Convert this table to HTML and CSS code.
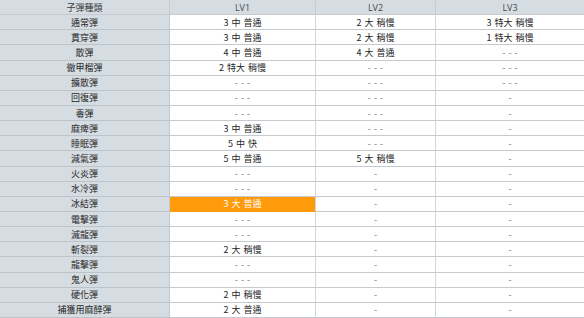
FILE: index.html
```html
<!DOCTYPE html>
<html lang="zh-Hant">
<head>
<meta charset="utf-8">
<link rel="stylesheet" href="styles.css">
</head>
<body>
<div class="sheet">
  <div class="c head">子彈種類</div><div class="c head lv">LV1</div><div class="c head lv">LV2</div><div class="c head lv last">LV3</div>

  <div class="c name">通常彈</div><div class="c">3 中 普通</div><div class="c">2 大 稍慢</div><div class="c last">3 特大 稍慢</div>
  <div class="c name">貫穿彈</div><div class="c">3 中 普通</div><div class="c">2 大 稍慢</div><div class="c last">1 特大 稍慢</div>
  <div class="c name">散彈</div><div class="c">4 中 普通</div><div class="c">4 大 普通</div><div class="c last dim">- - -</div>
  <div class="c name">徹甲榴彈</div><div class="c">2 特大 稍慢</div><div class="c dim">- - -</div><div class="c last dim">- - -</div>
  <div class="c name">擴散彈</div><div class="c dim">- - -</div><div class="c dim">- - -</div><div class="c last dim">- - -</div>
  <div class="c name">回復彈</div><div class="c dim">- - -</div><div class="c dim">- - -</div><div class="c last dim">-</div>
  <div class="c name">毒彈</div><div class="c dim">- - -</div><div class="c dim">- - -</div><div class="c last dim">-</div>
  <div class="c name">麻痺彈</div><div class="c">3 中 普通</div><div class="c dim">- - -</div><div class="c last dim">-</div>
  <div class="c name">睡眠彈</div><div class="c">5 中 快</div><div class="c dim">- - -</div><div class="c last dim">-</div>
  <div class="c name">減氣彈</div><div class="c">5 中 普通</div><div class="c">5 大 稍慢</div><div class="c last dim">-</div>
  <div class="c name">火炎彈</div><div class="c dim">- - -</div><div class="c dim">-</div><div class="c last dim">-</div>
  <div class="c name">水冷彈</div><div class="c dim">- - -</div><div class="c dim">-</div><div class="c last dim">-</div>
  <div class="c name">冰結彈</div><div class="c hot">3 大 普通</div><div class="c dim">-</div><div class="c last dim">-</div>
  <div class="c name">電擊彈</div><div class="c dim">- - -</div><div class="c dim">-</div><div class="c last dim">-</div>
  <div class="c name">滅龍彈</div><div class="c dim">- - -</div><div class="c dim">-</div><div class="c last dim">-</div>
  <div class="c name">斬裂彈</div><div class="c">2 大 稍慢</div><div class="c dim">-</div><div class="c last dim">-</div>
  <div class="c name">龍擊彈</div><div class="c dim">- - -</div><div class="c dim">-</div><div class="c last dim">-</div>
  <div class="c name">鬼人彈</div><div class="c dim">- - -</div><div class="c dim">-</div><div class="c last dim">-</div>
  <div class="c name">硬化彈</div><div class="c">2 中 稍慢</div><div class="c dim">-</div><div class="c last dim">-</div>
  <div class="c name">捕獲用麻醉彈</div><div class="c">2 大 普通</div><div class="c dim">-</div><div class="c last dim">-</div>
</div>
</body>
</html>
```

FILE: styles.css
```css
html, body {
  margin: 0;
  padding: 0;
  background: #ffffff;
}

.sheet {
  display: grid;
  grid-template-columns: 170px 146px 120px 148px;
  grid-template-rows: repeat(21, 1fr);
  width: 584px;
  height: 318px;
  font-family: "Noto Sans CJK TC", "Noto Sans", sans-serif;
  font-size: 9px;
  word-spacing: 1px;
  color: #262626;
}

.c {
  display: flex;
  align-items: center;
  justify-content: center;
  border-bottom: 1px solid #c6cacf;
  border-right: 1px solid #d2d6d9;
  background: #ffffff;
  white-space: nowrap;
  line-height: 1;
  overflow: hidden;
}

.c.last {
  border-right: none;
}

.head {
  background: #d5dde3;
  color: #3a3a3a;
  border-right-color: #c5ccd2;
}

.head.lv {
  font-family: "Open Sans", "Noto Sans", sans-serif;
  color: #4a4a4a;
}

.name {
  background: #d5dde3;
  border-bottom-color: #bcc3c9;
  border-right-color: #c3cad0;
}

.dim {
  color: #777777;
}

.hot {
  background: #ff9a0a;
  color: #ffffff;
  border-bottom-color: #ff9a0a;
}
```
